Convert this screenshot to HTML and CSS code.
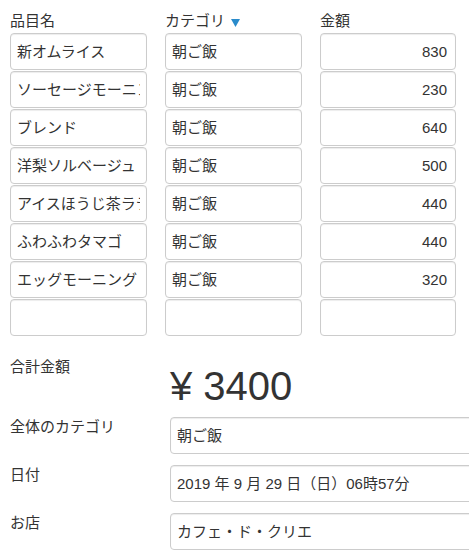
FILE: index.html
```html
<!DOCTYPE html>
<html lang="ja">
<head>
<meta charset="utf-8">
<title>レシート</title>
<link rel="stylesheet" href="styles.css">
</head>
<body>
<div class="items">
  <div class="head">品目名</div>
  <div class="head">カテゴリ <svg class="caret" width="9" height="8" viewBox="0 0 9 8"><path d="M0 0H9L4.5 8Z" fill="#2a8bcb"/></svg></div>
  <div class="head">金額</div>

  <div class="field"><span class="txt">新オムライス</span></div><div class="field">朝ご飯</div><div class="field num">830</div>
  <div class="field"><span class="txt">ソーセージモーニング</span></div><div class="field">朝ご飯</div><div class="field num">230</div>
  <div class="field"><span class="txt">ブレンド</span></div><div class="field">朝ご飯</div><div class="field num">640</div>
  <div class="field"><span class="txt">洋梨ソルベージュ</span></div><div class="field">朝ご飯</div><div class="field num">500</div>
  <div class="field"><span class="txt">アイスほうじ茶ラテ</span></div><div class="field">朝ご飯</div><div class="field num">440</div>
  <div class="field"><span class="txt">ふわふわタマゴ</span></div><div class="field">朝ご飯</div><div class="field num">440</div>
  <div class="field"><span class="txt">エッグモーニング</span></div><div class="field">朝ご飯</div><div class="field num">320</div>
  <div class="field"></div><div class="field"></div><div class="field num"></div>
</div>

<div class="summary">
  <div class="row total-row">
    <div class="label">合計金額</div>
    <div class="total">¥ 3400</div>
  </div>
  <div class="row">
    <div class="label">全体のカテゴリ</div>
    <div class="field wide">朝ご飯</div>
  </div>
  <div class="row">
    <div class="label">日付</div>
    <div class="field wide">2019 年 9 月 29 日（日）06時57分</div>
  </div>
  <div class="row">
    <div class="label">お店</div>
    <div class="field wide">カフェ・ド・クリエ</div>
  </div>
</div>
</body>
</html>
```

FILE: styles.css
```css
html, body {
  margin: 0;
  padding: 0;
  overflow: hidden;
  background: #fff;
}
body {
  font-family: "Liberation Sans", "Noto Sans CJK JP", sans-serif;
  font-size: 15px;
  color: #333;
}
.items {
  display: grid;
  grid-template-columns: 137px 137px 136px;
  column-gap: 18px;
  row-gap: 1px;
  padding: 11px 0 0 10px;
}
.head {
  line-height: 20px;
  margin-bottom: 1px;
  display: flex;
  align-items: center;
  gap: 6px;
}
.caret {
  margin-top: 3px;
}
.field {
  box-sizing: border-box;
  height: 37px;
  border: 1px solid #ccc;
  border-radius: 4px;
  box-shadow: inset 0 1px 1px rgba(0,0,0,.075);
  background: #fff;
  padding: 0 6px;
  line-height: 35px;
  white-space: nowrap;
  overflow: hidden;
}
.txt {
  display: block;
  overflow: hidden;
  white-space: nowrap;
}
.field.num {
  text-align: right;
  padding-right: 8px;
}
.summary {
  padding: 21px 0 0 10px;
  display: flex;
  flex-direction: column;
  gap: 11px;
}
.row {
  display: flex;
  align-items: flex-start;
}
.label {
  width: 160px;
  flex: none;
  line-height: 20px;
}
.total-row {
  margin-bottom: -3px;
}
.total {
  font-size: 40px;
  line-height: 46px;
  padding-top: 6px;
  white-space: nowrap;
}
.field.wide {
  width: 310px;
  flex: none;
}
```
